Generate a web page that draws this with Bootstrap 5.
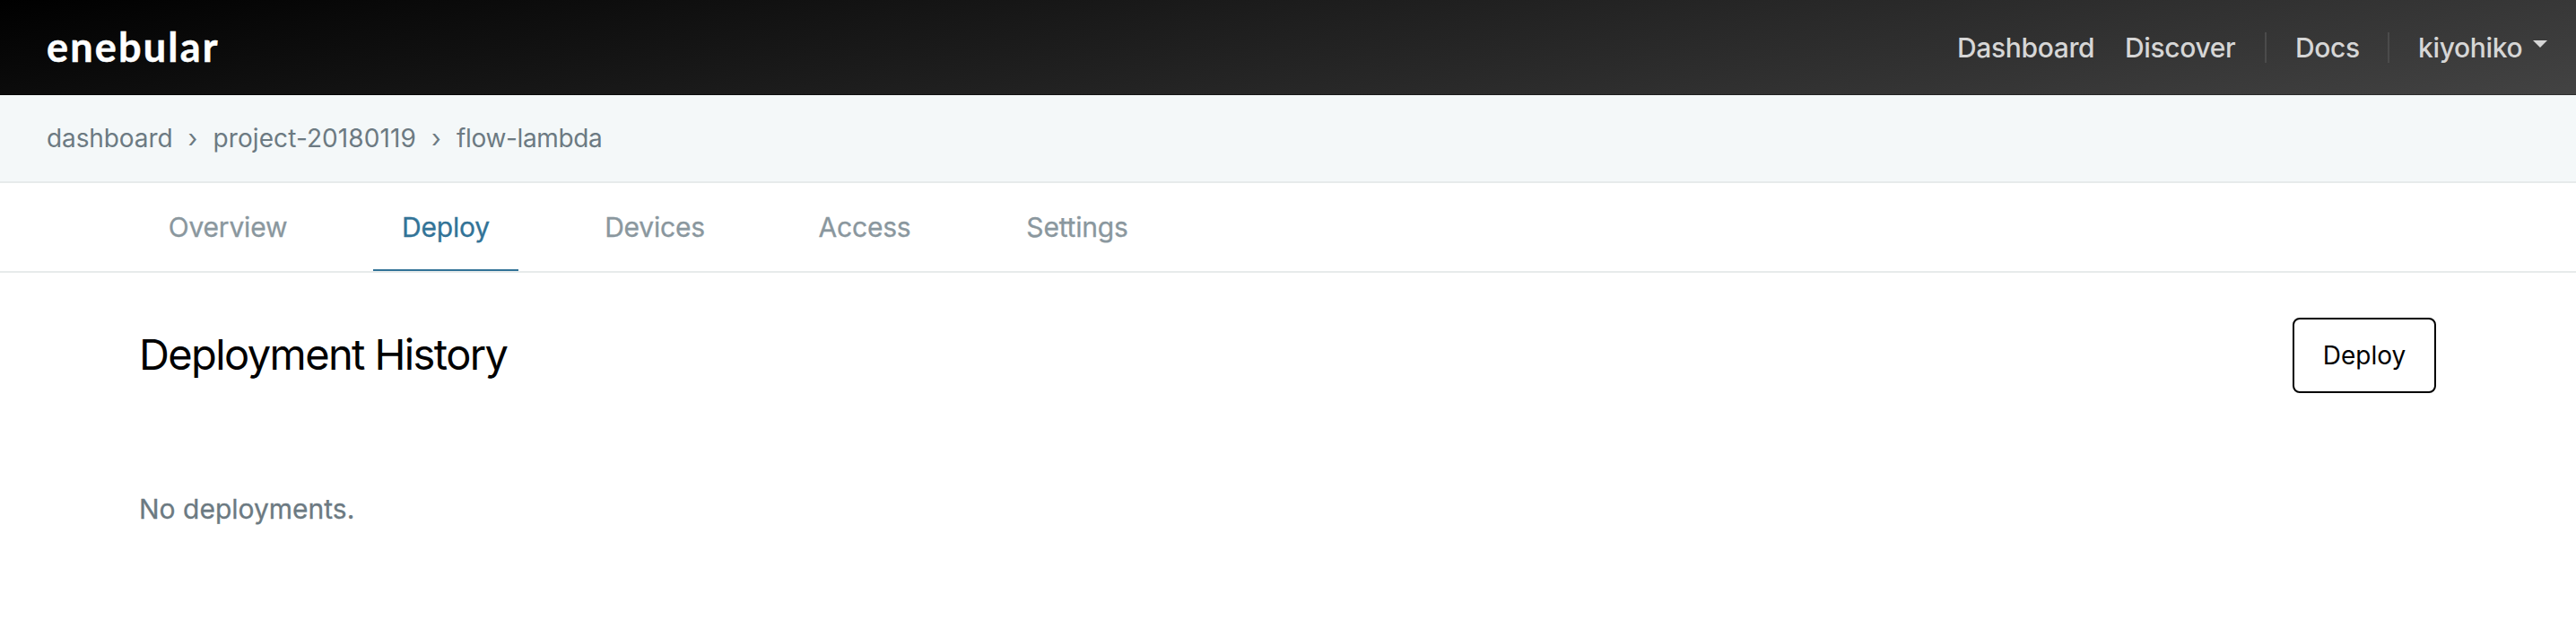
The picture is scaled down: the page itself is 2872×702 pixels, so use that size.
<!DOCTYPE html>
<html lang="en">
<head>
<meta charset="utf-8">
<meta name="viewport" content="width=device-width, initial-scale=1">
<title>enebular</title>
<link href="https://cdn.jsdelivr.net/npm/bootstrap@5.3.0/dist/css/bootstrap.min.css" rel="stylesheet">
<style>
body{font-family:Inter,sans-serif;background:#fff;color:#000}
a{text-decoration:none}
.topbar{height:106px;padding:0 32px 0 52px;background:linear-gradient(170deg,#000,#434343);border-bottom:1px solid rgba(0,0,0,.15)}
.brand{font:700 45px/60px Lato,sans-serif;letter-spacing:2.2px;color:#fff;padding-bottom:2px;-webkit-text-stroke:.5px #fff}
.topnav{display:grid;grid-template-columns:155px 124px 2px 71px 2px 144px;column-gap:32px;align-items:center;font-size:30px;line-height:40px;font-weight:500;letter-spacing:-.35px}
.topnav a{color:#d6d6d6;white-space:nowrap}
.divider{width:2px;height:34px;background:#4b4b4b}
.arrow{border:8px solid transparent;border-top-color:#d6d6d6;border-bottom:0;margin-bottom:7px}
.crumbs{height:98px;padding:0 52px 1px;background:#f4f8f9;border-bottom:2px solid #e7ebeb;font-size:28px;line-height:40px}
.crumbs a,.crumbs span{color:#6c7a82}
.crumbs a{letter-spacing:-.1px}
.crumbs .sep{width:45px;text-align:center}
.crumbs .wider{letter-spacing:.1px}
.crumbs .tighter{letter-spacing:-.35px}
.tabs{height:100px;padding-left:156px;border-bottom:2px solid #e7ebeb;column-gap:64px}
.tabs .nav-link{height:98px;padding:2px 0 0;text-align:center;font-size:30px;line-height:94px;letter-spacing:-.2px;color:#8a979e;border-radius:0;border-bottom:2px solid transparent;-webkit-text-stroke:.3px currentColor}
.tabs .nav-link.active{color:#327397;border-color:#327397}
.content{padding:50px 156px 0 155px}
.title{font-size:47px;font-weight:400;letter-spacing:-1.6px;line-height:60px;padding-bottom:3px}
.btn-deploy{width:160px;height:84px;border:2px solid #000;border-radius:8px;font-size:28px;color:#000;background:#fff;padding:0}
.empty{margin-top:109px;font-size:30px;line-height:40px;color:#6c7a82;-webkit-text-stroke:.3px currentColor}
</style>
</head>
<body>
<header class="topbar d-flex align-items-center justify-content-between">
  <a class="brand" href="#">enebular</a>
  <nav class="topnav">
    <a href="#">Dashboard</a>
    <a href="#">Discover</a>
    <span class="divider"></span>
    <a href="#">Docs</a>
    <span class="divider"></span>
    <a href="#" class="d-flex align-items-center justify-content-between">kiyohiko<span class="arrow"></span></a>
  </nav>
</header>
<nav class="crumbs d-flex align-items-center">
  <a href="#">dashboard</a><span class="sep">›</span><a href="#" class="wider">project-20180119</a><span class="sep">›</span><a href="#" class="tighter">flow-lambda</a>
</nav>
<ul class="tabs nav flex-nowrap">
  <li style="width:196px"><a class="nav-link" href="#">Overview</a></li>
  <li style="width:162px"><a class="nav-link active" href="#">Deploy</a></li>
  <li style="width:176px"><a class="nav-link" href="#">Devices</a></li>
  <li style="width:164px"><a class="nav-link" href="#">Access</a></li>
  <li style="width:182px"><a class="nav-link" href="#">Settings</a></li>
</ul>
<main class="content">
  <div class="d-flex align-items-center justify-content-between">
    <h1 class="title mb-0">Deployment History</h1>
    <button class="btn btn-deploy" type="button">Deploy</button>
  </div>
  <p class="empty mb-0">No deployments.</p>
</main>
<script src="https://cdn.jsdelivr.net/npm/bootstrap@5.3.0/dist/js/bootstrap.bundle.min.js"></script>
</body>
</html>
